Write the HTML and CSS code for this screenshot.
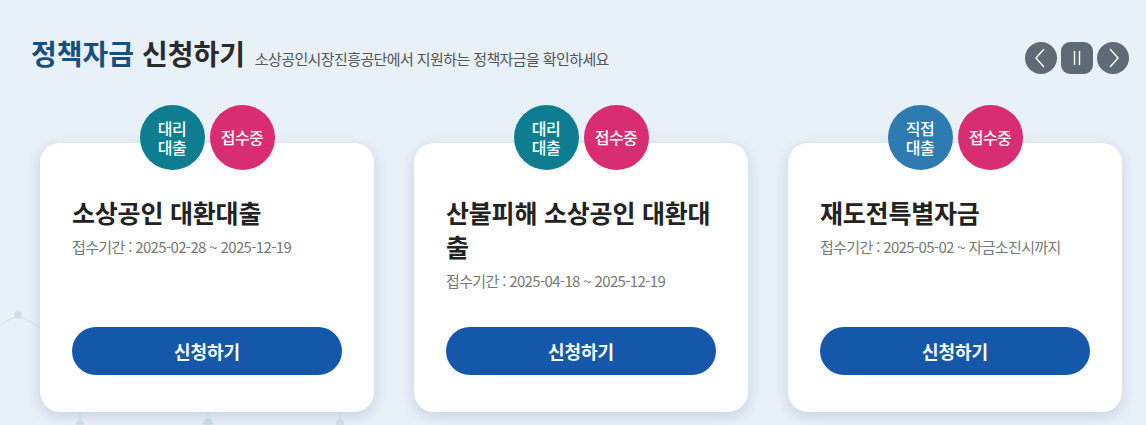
FILE: index.html
```html
<!DOCTYPE html>
<html lang="ko">
<head>
<meta charset="utf-8">
<title>정책자금 신청하기</title>
<link rel="stylesheet" href="styles.css">
</head>
<body>
<div class="page">
  <svg class="deco" width="1146" height="425" viewBox="0 0 1146 425" aria-hidden="true">
    <g stroke="#d3e0ea" stroke-width="1" fill="none">
      <line x1="-10" y1="330" x2="18" y2="315"/>
      <line x1="18" y1="315" x2="45" y2="330"/>
      <line x1="80" y1="412" x2="80" y2="425"/>
      <line x1="208" y1="412" x2="208" y2="425"/>
      <line x1="340" y1="412" x2="340" y2="425"/>
    </g>
    <g fill="#d3e0ea">
      <circle cx="18" cy="315" r="4"/>
      <circle cx="80" cy="424" r="4"/>
      <circle cx="208" cy="423" r="5"/>
      <circle cx="340" cy="423" r="4"/>
    </g>
  </svg>

  <header class="head">
    <h2 class="title"><span class="title-blue">정책자금</span> 신청하기 <span class="subtitle">소상공인시장진흥공단에서 지원하는 정책자금을 확인하세요</span></h2>
    <div class="controls">
      <button class="ctrl round" aria-label="이전">
        <svg width="32" height="32" viewBox="0 0 32 32"><polyline points="19,7 11,16 19,25" fill="none" stroke="#fff" stroke-width="1.4"/></svg>
      </button>
      <button class="ctrl square" aria-label="정지">
        <svg width="32" height="32" viewBox="0 0 32 32"><line x1="13.5" y1="9" x2="13.5" y2="23" stroke="#fff" stroke-width="1.4"/><line x1="18.5" y1="9" x2="18.5" y2="23" stroke="#fff" stroke-width="1.4"/></svg>
      </button>
      <button class="ctrl round" aria-label="다음">
        <svg width="32" height="32" viewBox="0 0 32 32"><polyline points="13,7 21,16 13,25" fill="none" stroke="#fff" stroke-width="1.4"/></svg>
      </button>
    </div>
  </header>

  <section class="cards">
    <article class="card">
      <div class="badges">
        <span class="badge teal">대리<br>대출</span>
        <span class="badge pink">접수중</span>
      </div>
      <h3 class="card-title">소상공인 대환대출</h3>
      <p class="card-date">접수기간 : 2025-02-28 ~ 2025-12-19</p>
      <a class="apply" href="#">신청하기</a>
    </article>
    <article class="card">
      <div class="badges">
        <span class="badge teal">대리<br>대출</span>
        <span class="badge pink">접수중</span>
      </div>
      <h3 class="card-title">산불피해 소상공인 대환대출</h3>
      <p class="card-date">접수기간 : 2025-04-18 ~ 2025-12-19</p>
      <a class="apply" href="#">신청하기</a>
    </article>
    <article class="card">
      <div class="badges">
        <span class="badge blue">직접<br>대출</span>
        <span class="badge pink">접수중</span>
      </div>
      <h3 class="card-title">재도전특별자금</h3>
      <p class="card-date">접수기간 : 2025-05-02 ~ 자금소진시까지</p>
      <a class="apply" href="#">신청하기</a>
    </article>
  </section>
</div>
</body>
</html>
```

FILE: styles.css
```css
* { box-sizing: border-box; }

html, body {
  margin: 0;
  padding: 0;
}

body {
  background: #e8f0f8;
  font-family: "Noto Sans CJK KR", "Noto Sans", sans-serif;
  overflow: hidden;
}

.page {
  position: relative;
  width: 1146px;
  height: 425px;
}

.deco {
  position: absolute;
  left: 0;
  top: 0;
  z-index: 0;
}

.head {
  position: relative;
  z-index: 1;
  display: flex;
  justify-content: space-between;
  align-items: flex-start;
  padding: 37px 17px 0 31px;
}

.title {
  margin: 0;
  font-size: 28px;
  line-height: 32px;
  font-weight: 700;
  letter-spacing: 0;
  color: #2b2b2b;
}

.title-blue {
  color: #174f7d;
}

.subtitle {
  margin-left: 2px;
  font-size: 15px;
  font-weight: 400;
  letter-spacing: -0.6px;
  color: #555;
}

.controls {
  display: flex;
  gap: 4px;
  margin-top: 5px;
}

.ctrl {
  width: 32px;
  height: 32px;
  padding: 0;
  border: 0;
  background: #5e6a75;
  display: flex;
  align-items: center;
  justify-content: center;
  cursor: pointer;
}

.ctrl.round { border-radius: 50%; }
.ctrl.square { border-radius: 9px; }

.cards {
  position: relative;
  z-index: 1;
  display: flex;
  gap: 40px;
  padding-left: 40px;
  margin-top: 68px;
}

.card {
  position: relative;
  width: 334px;
  height: 269px;
  background: #fff;
  border-radius: 20px;
  box-shadow: 0 4px 14px rgba(30, 60, 100, 0.16);
  padding: 52px 32px 37px;
  display: flex;
  flex-direction: column;
}

.badges {
  position: absolute;
  top: -38px;
  left: 0;
  right: 0;
  display: flex;
  justify-content: center;
  gap: 5px;
}

.badge {
  width: 65px;
  height: 65px;
  border-radius: 50%;
  display: flex;
  align-items: center;
  justify-content: center;
  text-align: center;
  color: #fff;
  font-size: 16px;
  line-height: 19px;
  font-weight: 500;
  letter-spacing: -0.5px;
}

.badge.teal { background: #0d7d8f; }
.badge.pink { background: #d82d71; }
.badge.blue { background: #2e7bb1; }

.card-title {
  margin: 0;
  font-size: 25px;
  line-height: 34px;
  font-weight: 700;
  letter-spacing: -0.2px;
  color: #222;
  word-break: break-all;
}

.card-date {
  margin: 8px 0 0;
  font-size: 15px;
  line-height: 20px;
  letter-spacing: -0.65px;
  color: #777;
}

.apply {
  margin-top: auto;
  height: 48px;
  border-radius: 24px;
  background: #1558aa;
  color: #fff;
  text-decoration: none;
  font-size: 18px;
  font-weight: 700;
  letter-spacing: 0;
  display: flex;
  align-items: center;
  justify-content: center;
}
```
